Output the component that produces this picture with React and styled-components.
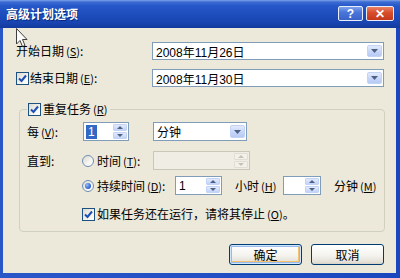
import React from 'react';
import styled, { createGlobalStyle } from 'styled-components';

const GlobalStyle = createGlobalStyle`
  html, body { margin: 0; padding: 0; background: #ffffff; }
  body {
    font-family: "Noto Sans CJK SC", "Noto Sans", "Liberation Sans", sans-serif;
    font-size: 12px;
    color: #000;
  }
  * { box-sizing: border-box; }
`;

const Window = styled.div`
  position: relative;
  width: 400px;
  height: 278px;
  display: flex;
  flex-direction: column;
  background: linear-gradient(90deg, #2A57C8 0, #1A47BE 100%);
  overflow: hidden;
`;

const TitleBar = styled.div`
  flex: none;
  height: 28px;
  display: flex;
  align-items: center;
  padding: 0 6px 0 6px;
  background: linear-gradient(#7FA3E8 0, #3C6BD3 2px, #2657C8 6px, #1D4CBC 15px, #1844B0 23px, #133A9C 28px);
`;

const TitleText = styled.span`
  color: #ffffff;
  font-weight: bold;
  font-size: 12px;
  text-shadow: 1px 1px 0 #0D2A7A;
  margin-top: -1px;
`;

const TitleButtons = styled.div`
  margin-left: auto;
  display: flex;
  gap: 3px;
  margin-top: -1px;
`;

const CaptionButton = styled.div`
  width: ${p => p.$w}px;
  height: 15px;
  border: 1px solid #E8EEFB;
  border-radius: 2px;
  display: flex;
  align-items: center;
  justify-content: center;
  color: #fff;
  font-family: "Liberation Sans", sans-serif;
  font-weight: bold;
  font-size: 12px;
  line-height: 1;
  background: ${p => p.$red
    ? 'linear-gradient(#E98266 0, #D9502E 40%, #C4381A 100%)'
    : 'linear-gradient(#7DA2EC 0, #4A76DB 40%, #3A63C8 100%)'};
`;

const Frame = styled.div`
  flex: 1;
  margin: 0 4px 5px 3px;
  background: #ECE9DB;
  display: flex;
  flex-direction: column;
`;

const TopRow = styled.div`
  display: flex;
  align-items: center;
  height: 18px;
  margin-top: ${p => p.$mt}px;
  padding: 0 12px 0 13px;
`;

const Label = styled.label`
  display: flex;
  align-items: center;
  flex: none;
  width: ${p => (p.$w ? `${p.$w}px` : 'auto')};
  margin-left: ${p => p.$ml || 0}px;
  white-space: nowrap;
  gap: ${p => p.$gap || 0}px;
  line-height: 14px;
`;

const Key = styled.span`
  text-decoration: underline;
  text-underline-offset: 1px;
`;

const Paren = styled.span`
  margin-left: 2px;
  font-size: 11px;
`;

const Box = styled.div`
  flex: none;
  display: flex;
  align-items: center;
  width: ${p => p.$w}px;
  height: ${p => p.$h || 19}px;
  margin-left: ${p => p.$ml || 0}px;
  border: 1px solid ${p => (p.$disabled ? '#C9C7BA' : '#7F9DB9')};
  background: ${p => (p.$disabled ? '#EFEDE4' : '#ffffff')};
  padding-left: 3px;
  font-family: "Liberation Sans", "Noto Sans CJK SC", sans-serif;
  font-size: 12px;
`;

const BoxText = styled.span`
  font-family: "Liberation Sans", "Noto Sans CJK SC", sans-serif;
  white-space: nowrap;
`;

const Selected = styled.span`
  background: #316AC5;
  color: #fff;
  padding: 0 2px;
  line-height: 14px;
  margin-left: -1px;
`;

const DropButton = styled.div`
  margin-left: auto;
  margin-right: 1px;
  width: 15px;
  height: calc(100% - 4px);
  border: 1px solid #C3D3F5;
  border-radius: 2px;
  background: linear-gradient(#E2EAFC 0, #C5D5F8 60%, #B7CAF4 100%);
  display: flex;
  align-items: center;
  justify-content: center;
`;

const Spinner = styled.div`
  margin-left: auto;
  width: 15px;
  height: 100%;
  padding: 1px 1px 1px 0;
  display: flex;
  flex-direction: column;
  gap: 1px;
`;

const SpinButton = styled.div`
  flex: 1;
  border: 1px solid ${p => (p.$disabled ? '#E0DED4' : '#C3D3F5')};
  border-radius: 1px;
  background: ${p => (p.$disabled
    ? '#F3F1EA'
    : 'linear-gradient(#E2EAFC 0, #C2D3F8 100%)')};
  display: flex;
  align-items: center;
  justify-content: center;
`;

const Tri = styled.span`
  width: 0;
  height: 0;
  border-left: 3px solid transparent;
  border-right: 3px solid transparent;
  ${p => (p.$up ? 'border-bottom' : 'border-top')}: 3px solid ${p => (p.$disabled ? '#C5C3B8' : '#4D6185')};
`;

const CheckBox = styled.span`
  flex: none;
  width: 13px;
  height: 13px;
  border: 1px solid #1C5180;
  background: linear-gradient(135deg, #DCDBD2 0, #F4F3EE 60%, #ffffff 100%);
  display: flex;
  align-items: center;
  justify-content: center;
  margin-left: ${p => p.$ml || 0}px;
`;

const Radio = styled.span`
  flex: none;
  width: 12px;
  height: 12px;
  border-radius: 50%;
  border: 1px solid #6F8DB5;
  background: linear-gradient(135deg, #DCD9CE 0, #F6F5F0 60%, #ffffff 100%);
  display: flex;
  align-items: center;
  justify-content: center;
`;

const RadioDot = styled.span`
  width: 6px;
  height: 6px;
  border-radius: 50%;
  background: radial-gradient(circle at 35% 35%, #9BBDF5 0, #3A6FD8 55%, #1E4BB0 100%);
`;

const Group = styled.fieldset`
  margin: 15px 11px 0 16px;
  padding: 6px 0 10px 7px;
  border: 1px solid #D0D0BF;
  border-radius: 4px;
  min-width: 0;
`;

const Legend = styled.legend`
  display: flex;
  align-items: center;
  gap: 2px;
  height: 14px;
  padding: 0 3px 0 1px;
  line-height: 14px;
`;

const GroupRow = styled.div`
  display: flex;
  align-items: center;
  height: ${p => p.$h || 19}px;
  margin-top: ${p => p.$mt || 0}px;
`;

const ButtonRow = styled.div`
  display: flex;
  justify-content: flex-end;
  gap: 9px;
  margin-top: 12px;
  padding-right: 12px;
`;

const Button = styled.button`
  width: 73px;
  height: 21px;
  border: 1px solid #003C74;
  border-radius: 3px;
  background: linear-gradient(#FFFFFF 0, #F4F3EE 55%, #E3E0D6 90%, #D6D0C5 100%);
  font-family: "Noto Sans CJK SC", sans-serif;
  font-size: 12px;
  color: #000;
  padding: 0;
  box-shadow: ${p => (p.$default
    ? 'inset 0 0 0 1px #CEE7FF, inset 0 0 0 2px #98B8EA, inset -2px -2px 0 1px #F6C26F'
    : 'none')};
`;

const Cursor = styled.svg`
  position: absolute;
  left: 16px;
  top: 28px;
  pointer-events: none;
`;

function DropArrow() {
  return (
    <DropButton>
      <svg width="7" height="4" viewBox="0 0 7 4">
        <path d="M0 0 L7 0 L3.5 4 Z" fill="#4D6185" />
      </svg>
    </DropButton>
  );
}

function SpinControl({ disabled }) {
  return (
    <Spinner>
      <SpinButton $disabled={disabled}><Tri $up $disabled={disabled} /></SpinButton>
      <SpinButton $disabled={disabled}><Tri $disabled={disabled} /></SpinButton>
    </Spinner>
  );
}

function Check() {
  return (
    <CheckBox>
      <svg width="9" height="9" viewBox="0 0 9 9">
        <path d="M1 4.5 L3.5 7 L8 1.5" fill="none" stroke="#1E4FB4" strokeWidth="2" />
      </svg>
    </CheckBox>
  );
}

function Text({ main, k, tail = '' }) {
  return (
    <span>
      {main}
      <Paren>(<Key>{k}</Key>)</Paren>
      {tail}
    </span>
  );
}

export default function App() {
  return (
    <>
      <GlobalStyle />
      <Window>
        <TitleBar>
          <TitleText>高级计划选项</TitleText>
          <TitleButtons>
            <CaptionButton $w={25}>?</CaptionButton>
            <CaptionButton $w={28} $red>✕</CaptionButton>
          </TitleButtons>
        </TitleBar>
        <Frame>
          <TopRow $mt={14}>
            <Label $w={136}><Text main="开始日期" k="S" tail=":" /></Label>
            <Box $w={232} $h={18}>
              <BoxText>2008年11月26日</BoxText>
              <DropArrow />
            </Box>
          </TopRow>
          <TopRow $mt={9}>
            <Label $w={136} $gap={1}>
              <Check />
              <Text main="结束日期" k="E" tail=":" />
            </Label>
            <Box $w={232} $h={18}>
              <BoxText>2008年11月30日</BoxText>
              <DropArrow />
            </Box>
          </TopRow>

          <Group>
            <Legend>
              <Check />
              <Text main="重复任务" k="R" />
            </Legend>
            <GroupRow>
              <Label $w={56}><Text main="每" k="V" tail=":" /></Label>
              <Box $w={46}>
                <Selected>1</Selected>
                <SpinControl />
              </Box>
              <Box $w={94} $ml={24}>
                <span>分钟</span>
                <DropArrow />
              </Box>
            </GroupRow>
            <GroupRow $mt={10}>
              <Label $w={55}>直到:</Label>
              <Label $w={71} $gap={3}>
                <Radio />
                <Text main="时间" k="T" tail=":" />
              </Label>
              <Box $w={97} $disabled>
                <SpinControl disabled />
              </Box>
            </GroupRow>
            <GroupRow $mt={6}>
              <Label $w={55} />
              <Label $w={93} $gap={3}>
                <Radio><RadioDot /></Radio>
                <Text main="持续时间" k="D" tail=":" />
              </Label>
              <Box $w={47}>
                <BoxText>1</BoxText>
                <SpinControl />
              </Box>
              <Label $w={48} $ml={13}><Text main="小时" k="H" /></Label>
              <Box $w={38}>
                <SpinControl />
              </Box>
              <Label $ml={13}><Text main="分钟" k="M" /></Label>
            </GroupRow>
            <GroupRow $mt={12} $h={14}>
              <Label $ml={55} $gap={2}>
                <Check />
                <Text main="如果任务还在运行，请将其停止" k="O" tail="。" />
              </Label>
            </GroupRow>
          </Group>

          <ButtonRow>
            <Button $default>确定</Button>
            <Button>取消</Button>
          </ButtonRow>
        </Frame>
        <Cursor width="13" height="20" viewBox="0 0 13 20">
          <path d="M0.5 0.5 L0.5 16 L4 12.5 L6.5 18.5 L9 17.5 L6.5 11.5 L11 11.5 Z" fill="#ffffff" stroke="#222" strokeWidth="1" opacity="0.85" />
        </Cursor>
      </Window>
    </>
  );
}
